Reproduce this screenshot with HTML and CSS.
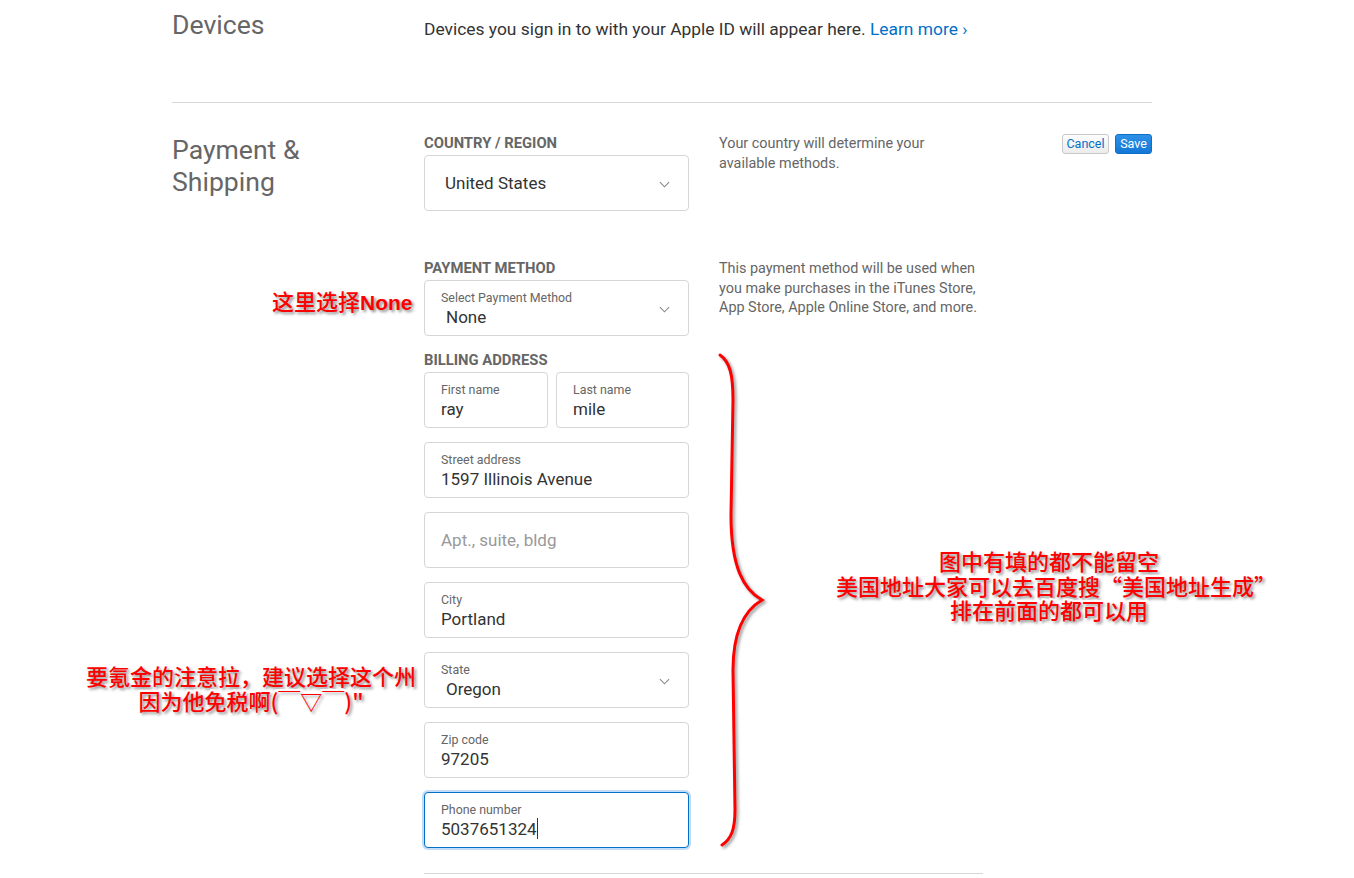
FILE: index.html
```html
<!DOCTYPE html>
<html lang="en">
<head>
<meta charset="UTF-8">
<title>Apple ID - Payment &amp; Shipping</title>
<link rel="stylesheet" href="styles.css">
</head>
<body>

<div class="page">

	<div class="section devices">
		<h2 class="section-title">Devices</h2>
		<p class="section-text">Devices you sign in to with your Apple ID will appear here. <a href="#" class="link">Learn more ›</a></p>
	</div>

	<div class="section payment">
		<h2 class="section-title">Payment &amp;<br>Shipping</h2>

		<div class="section-body">
			<div class="form-row">
				<div class="form-group">
					<div class="group-label">COUNTRY / REGION</div>
					<div class="field field-select field-single">
						<div class="field-value">United States</div>
						<svg class="chevron" viewBox="0 0 12 7"><path d="M1 1l5 5 5-5"/></svg>
					</div>
				</div>
				<div class="form-help">Your country will determine your<br>available methods.</div>
				<div class="form-actions">
					<button class="btn btn-cancel">Cancel</button>
					<button class="btn btn-save">Save</button>
				</div>
			</div>

			<div class="form-row row-payment">
				<div class="form-group">
					<div class="group-label">PAYMENT METHOD</div>
					<div class="field field-select">
						<div class="field-label">Select Payment Method</div>
						<div class="field-value">None</div>
						<svg class="chevron" viewBox="0 0 12 7"><path d="M1 1l5 5 5-5"/></svg>
					</div>
				</div>
				<div class="form-help">This payment method will be used when<br>you make purchases in the iTunes Store,<br>App Store, Apple Online Store, and more.</div>
			</div>

			<div class="form-row row-billing">
				<div class="form-group">
					<div class="group-label">BILLING ADDRESS</div>
					<div class="field-pair">
						<div class="field field-first">
							<div class="field-label">First name</div>
							<div class="field-value">ray</div>
						</div>
						<div class="field">
							<div class="field-label">Last name</div>
							<div class="field-value">mile</div>
						</div>
					</div>
					<div class="field">
						<div class="field-label">Street address</div>
						<div class="field-value">1597 Illinois Avenue</div>
					</div>
					<div class="field field-single">
						<div class="field-placeholder">Apt., suite, bldg</div>
					</div>
					<div class="field">
						<div class="field-label">City</div>
						<div class="field-value">Portland</div>
					</div>
					<div class="field field-select">
						<div class="field-label">State</div>
						<div class="field-value">Oregon</div>
						<svg class="chevron" viewBox="0 0 12 7"><path d="M1 1l5 5 5-5"/></svg>
					</div>
					<div class="field">
						<div class="field-label">Zip code</div>
						<div class="field-value">97205</div>
					</div>
					<div class="field field-focus">
						<div class="field-label">Phone number</div>
						<div class="field-value">5037651324<span class="caret"></span></div>
					</div>
				</div>
			</div>
		</div>
	</div>

	<!-- пометки поверх скриншота -->
	<div class="note note-none">这里选择<b>None</b></div>
	<div class="note note-right">图中有填的都不能留空<br>美国地址大家可以去百度搜“美国地址生成”<br>排在前面的都可以用</div>
	<div class="note note-left">要氪金的注意拉，建议选择这个州<br>因为他免税啊(￣▽￣)"</div>

	<svg class="brace" viewBox="0 0 80 520">
		<path d="M20 15 C30 22 33 35 33 60 L31 175 C31 228 44 250 62 260 C45 270 33 292 33 330 L35 470 C35 490 31 499 22 505"/>
	</svg>

</div>

</body>
</html>
```

FILE: styles.css
```css
body {
	margin: 0;
	background: #fff;
	font-family: Roboto, "Liberation Sans", Arial, sans-serif;
	color: #333;
}

.page {
	position: relative;
	width: 1354px;
	height: 878px;
	overflow: hidden;
}

.section {
	display: flex;
	margin-left: 172px;
	width: 980px;
}
.section-title {
	width: 252px;
	flex: none;
	margin: 0;
	font-size: 26.6px;
	line-height: 32px;
	font-weight: normal;
	color: #666;
}

.devices {
	padding-top: 9px;
	box-sizing: border-box;
	border-bottom: 1px solid #d6d6d6;
	height: 103px;
}
.devices .section-text {
	margin: 8px 0 0;
	font-size: 17.4px;
	line-height: 24px;
	color: #333;
}
.link {
	color: #0070c9;
	text-decoration: none;
}

.payment {
	padding-top: 31px;
}
.section-body {
	flex: 1;
}

.form-row {
	display: flex;
}
.row-payment {
	margin-top: 48px;
}
.row-billing {
	margin-top: 15px;
	width: 559px;
	padding-bottom: 25px;
	border-bottom: 1px solid #d6d6d6;
}

.form-group {
	width: 265px;
	flex: none;
}
.group-label {
	font-size: 14.8px;
	line-height: 18px;
	font-weight: bold;
	color: #666;
	margin-bottom: 3px;
}

.form-help {
	width: 270px;
	margin-left: 30px;
	font-size: 14.4px;
	line-height: 19.6px;
	color: #666;
}

.form-actions {
	flex: 1;
	display: flex;
	justify-content: flex-end;
	gap: 6px;
}
.btn {
	height: 20px;
	padding: 0 2px;
	border-radius: 3px;
	font-family: Roboto, "Liberation Sans", Arial, sans-serif;
	font-size: 12.5px;
	line-height: 18px;
	cursor: pointer;
}
.btn-cancel {
	width: 47px;
	color: #0070c9;
	border: 1px solid #c9c9c9;
	background: linear-gradient(#fdfdfd, #ececec);
}
.btn-save {
	width: 37px;
	color: #fff;
	border: 1px solid #0f6fc6;
	background: linear-gradient(#2e91e8, #1277d6);
}

.field {
	position: relative;
	height: 56px;
	box-sizing: border-box;
	border: 1px solid #d6d6d6;
	border-radius: 4px;
	padding: 9px 16px 0;
	margin-bottom: 14px;
	background: #fff;
}
.field:last-child {
	margin-bottom: 0;
}
.field-pair {
	display: flex;
	gap: 8px;
	margin-bottom: 14px;
}
.field-pair .field {
	flex: 1;
	margin-bottom: 0;
}
.field-pair .field-first {
	flex: none;
	width: 124px;
}
.field-label {
	font-size: 12.4px;
	line-height: 16px;
	color: #666;
}
.field-value {
	font-size: 17px;
	line-height: 22px;
	color: #333;
}
.field-select .field-value {
	padding-left: 5px;
}
.field-single {
	display: flex;
	align-items: center;
	padding-top: 0;
}
.field-single .field-value {
	padding-left: 4px;
}
.field-placeholder {
	font-size: 17px;
	color: #999;
}
.chevron {
	position: absolute;
	right: 18px;
	top: 25px;
	width: 11px;
	height: 7px;
	fill: none;
	stroke: #888;
	stroke-width: 1.2;
}
.field-focus {
	border-color: #0070c9;
	box-shadow: 0 0 0 2px rgba(120, 180, 240, 0.45);
}
.caret {
	display: inline-block;
	width: 1px;
	height: 21px;
	background: #333;
	vertical-align: -4px;
}

.note {
	position: absolute;
	font-family: "Noto Sans CJK SC", sans-serif;
	font-size: 22px;
	font-weight: 500;
	line-height: 25px;
	color: #ff0000;
	text-align: center;
	white-space: nowrap;
	-webkit-text-stroke: 4px #fff;
	paint-order: stroke fill;
	text-shadow: 2px 2px 3px rgba(0, 0, 0, 0.45);
}
.note b {
	font-family: "Liberation Sans", Arial, sans-serif;
	font-weight: bold;
	font-size: 21px;
}
.note-none {
	left: 272px;
	top: 288px;
}
.note-right {
	left: 836px;
	width: 426px;
	top: 548px;
	line-height: 24.5px;
}
.note-left {
	left: 84px;
	width: 334px;
	top: 663px;
}

.brace {
	position: absolute;
	left: 700px;
	top: 340px;
	width: 80px;
	height: 520px;
	fill: none;
	stroke: #ff0000;
	stroke-width: 3;
	stroke-linecap: round;
	filter: drop-shadow(2px 2px 1.5px rgba(0, 0, 0, 0.4));
}
```
